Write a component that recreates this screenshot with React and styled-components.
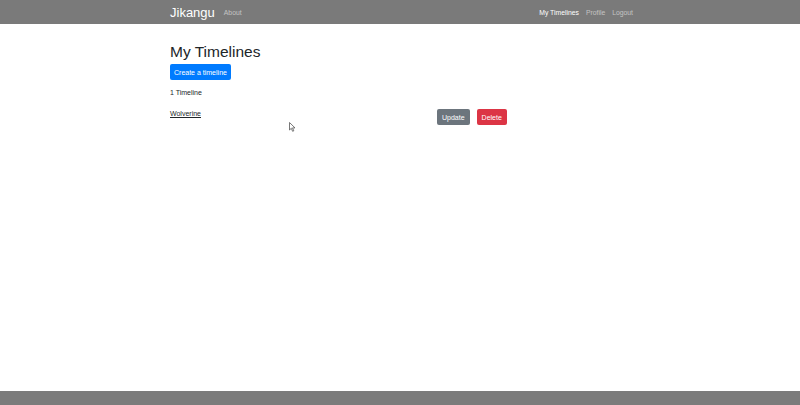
import styled, { createGlobalStyle } from "styled-components"

const GlobalStyle = createGlobalStyle`
	html, body {
		margin: 0;
		padding: 0;
		background: #ffffff;
		font-family: "Liberation Sans", Arial, sans-serif;
		color: #212529;
	}
	#root {
		min-height: 405px;
		display: flex;
		flex-direction: column;
	}
`

const NavBar = styled.nav`
	height: 24px;
	background-color: #7a7a7a;
	display: flex;
	align-items: center;
	justify-content: space-between;
	padding: 0 167px 0 170px;
`

const NavGroup = styled.div`
	display: flex;
	align-items: center;
	gap: ${({ gap }) => gap || 7}px;
`

const Brand = styled.a`
	font-size: 13px;
	color: #ffffff;
	text-decoration: none;
`

const NavLink = styled.a`
	font-size: 6.8px;
	color: ${({ active }) => (active ? "#ffffff" : "#c4c4c4")};
	text-decoration: none;
`

const Main = styled.main`
	flex: 1;
	position: relative;
`

const Container = styled.div`
	width: 460px;
	margin: 0 auto;
	padding-top: 20px;
`

const Title = styled.h1`
	margin: 0;
	font-size: 15.5px;
	font-weight: 400;
	line-height: 16px;
`

const Button = styled.button`
	font-family: "Liberation Sans", Arial, sans-serif;
	font-size: 7px;
	color: #ffffff;
	border: none;
	border-radius: 2px;
	padding: 0 ${({ pad }) => pad || 5}px;
	height: 16px;
	background-color: ${({ variant }) =>
		variant === "secondary" ? "#6c757d" : variant === "danger" ? "#dc3545" : "#007bff"};
	cursor: pointer;
`

const CreateRow = styled.div`
	margin-top: 4px;
	line-height: 0;
`

const Count = styled.p`
	margin: 8px 0 0;
	font-size: 7px;
	line-height: 10px;
`

const TimelineRow = styled.div`
	display: flex;
	align-items: center;
	margin-top: 11px;
	height: 16px;
`

const TimelineLink = styled.a`
	font-size: 7px;
	color: #212529;
	text-decoration: underline;
	width: 267px;
	align-self: flex-start;
	margin-top: 1px;
`

const Actions = styled.div`
	display: flex;
	gap: 7px;
`

const Cursor = styled.svg`
	position: absolute;
	left: 289px;
	top: 98px;
`

const Footer = styled.footer`
	height: 14px;
	background-color: #7b7b7b;
`

export default function App() {
	return (
		<>
			<GlobalStyle />
			<NavBar>
				<NavGroup gap={9}>
					<Brand href="#">Jikangu</Brand>
					<NavLink href="#">About</NavLink>
				</NavGroup>
				<NavGroup gap={7}>
					<NavLink href="#" active>
						My Timelines
					</NavLink>
					<NavLink href="#">Profile</NavLink>
					<NavLink href="#">Logout</NavLink>
				</NavGroup>
			</NavBar>
			<Main>
				<Container>
					<Title>My Timelines</Title>
					<CreateRow>
						<Button pad={4}>Create a timeline</Button>
					</CreateRow>
					<Count>1 Timeline</Count>
					<TimelineRow>
						<TimelineLink href="#">Wolverine</TimelineLink>
						<Actions>
							<Button variant="secondary">Update</Button>
							<Button variant="danger">Delete</Button>
						</Actions>
					</TimelineRow>
				</Container>
				<Cursor width="7" height="10" viewBox="0 0 7 10">
					<path d="M0.5 0.5 L0.5 8 L2.3 6.3 L3.6 9.3 L4.8 8.8 L3.5 5.9 L6 5.9 Z" fill="#ffffff" stroke="#555" strokeWidth="0.8" />
				</Cursor>
			</Main>
			<Footer />
		</>
	)
}
